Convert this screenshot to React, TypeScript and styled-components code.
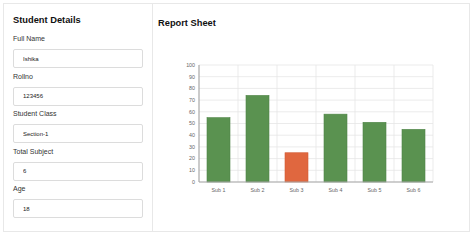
import styled, { createGlobalStyle } from "styled-components";

const GlobalStyle = createGlobalStyle`
  body {
    margin: 0;
    background: #ffffff;
    font-family: "Liberation Sans", Arial, sans-serif;
  }
`;

const student = [
  { label: "Full Name", value: "Ishika" },
  { label: "Rollno", value: "123456" },
  { label: "Student Class", value: "Section-1" },
  { label: "Total Subject", value: "6" },
  { label: "Age", value: "18" },
];

const marks = [
  { name: "Sub 1", score: 55 },
  { name: "Sub 2", score: 74 },
  { name: "Sub 3", score: 25 },
  { name: "Sub 4", score: 58 },
  { name: "Sub 5", score: 51 },
  { name: "Sub 6", score: 45 },
];

const PASS_MARK = 33;

export default function App() {
  return (
    <>
      <GlobalStyle />
      <Page>
        <DetailsCard>
          <Title>Student Details</Title>
          {student.map(({ label, value }) => (
            <Field key={label}>
              <Label>{label}</Label>
              <Input readOnly value={value} />
            </Field>
          ))}
        </DetailsCard>
        <ReportCard>
          <ReportTitle>Report Sheet</ReportTitle>
          <ReportChart />
        </ReportCard>
      </Page>
    </>
  );
}

function ReportChart() {
  const left = 19;
  const top = 7;
  const bottom = 124;
  const colWidth = 39;
  const barWidth = 23;
  const right = left + colWidth * marks.length;
  const unit = (bottom - top) / 100;
  const ticks = Array.from({ length: 11 }, (_, i) => i * 10);

  return (
    <Chart width={260} height={138} viewBox="0 0 260 138">
      {ticks.map((t) => {
        const y = bottom - t * unit;
        return (
          <g key={t}>
            <line x1={left} x2={right} y1={y} y2={y} stroke="#e6e6e6" strokeWidth={0.8} />
            <text x={left - 4} y={y + 1.8} textAnchor="end" fontSize={5.3} fill="#666">
              {t}
            </text>
          </g>
        );
      })}
      {marks.map((m, i) => {
        const x = left + (i + 1) * colWidth;
        return <line key={m.name} x1={x} x2={x} y1={top} y2={bottom} stroke="#e6e6e6" strokeWidth={0.8} />;
      })}
      {marks.map((m, i) => {
        const h = m.score * unit;
        const x = left + i * colWidth + (colWidth - barWidth) / 2;
        const fail = m.score < PASS_MARK;
        return (
          <g key={m.name}>
            <rect
              x={x}
              y={bottom - h}
              width={barWidth}
              height={h}
              fill={fail ? "#e0673f" : "#5a9250"}
              stroke={fail ? "#d25a34" : "#4e8446"}
              strokeWidth={0.6}
            />
            <text x={x + barWidth / 2} y={134} textAnchor="middle" fontSize={5.3} fill="#666">
              {m.name}
            </text>
          </g>
        );
      })}
      <line x1={left} x2={left} y1={top} y2={bottom} stroke="#a8a8a8" strokeWidth={1.2} />
      <line x1={left} x2={right} y1={bottom} y2={bottom} stroke="#a8a8a8" strokeWidth={1.2} />
    </Chart>
  );
}

const Page = styled.div`
  display: flex;
  padding: 3px 4px 3px 3px;
  height: 235px;
  box-sizing: border-box;
`;

const Card = styled.section`
  border: 1px solid #e8e8e8;
  box-sizing: border-box;
  height: 229px;
  background: #fff;
`;

const DetailsCard = styled(Card)`
  width: 150px;
  padding: 10px 9px 0 9px;
  display: flex;
  flex-direction: column;
`;

const ReportCard = styled(Card)`
  flex: 1;
  border-left: none;
  padding: 13px 5px 0 5px;
  display: flex;
  flex-direction: column;
`;

const Title = styled.h2`
  margin: 0 0 8px 0;
  font-size: 9.3px;
  line-height: 12px;
  font-weight: 700;
  color: #111;
`;

const ReportTitle = styled(Title)`
  margin: 0;
`;

const Field = styled.div`
  display: flex;
  flex-direction: column;
  margin-bottom: 3.5px;
`;

const Label = styled.label`
  font-size: 7px;
  line-height: 10px;
  font-weight: 400;
  color: #333333;
  margin-bottom: 5px;
`;

const Input = styled.input`
  box-sizing: border-box;
  width: 130px;
  height: 19px;
  border: 1px solid #dcdcdc;
  border-radius: 2px;
  padding: 0 0 0 9px;
  font-family: "Liberation Sans", Arial, sans-serif;
  font-size: 6px;
  color: #222;
  background: #fff;
  outline: none;
`;

const Chart = styled.svg`
  display: block;
  margin: 29px 0 0 22px;
  font-family: "Liberation Sans", Arial, sans-serif;
`;
